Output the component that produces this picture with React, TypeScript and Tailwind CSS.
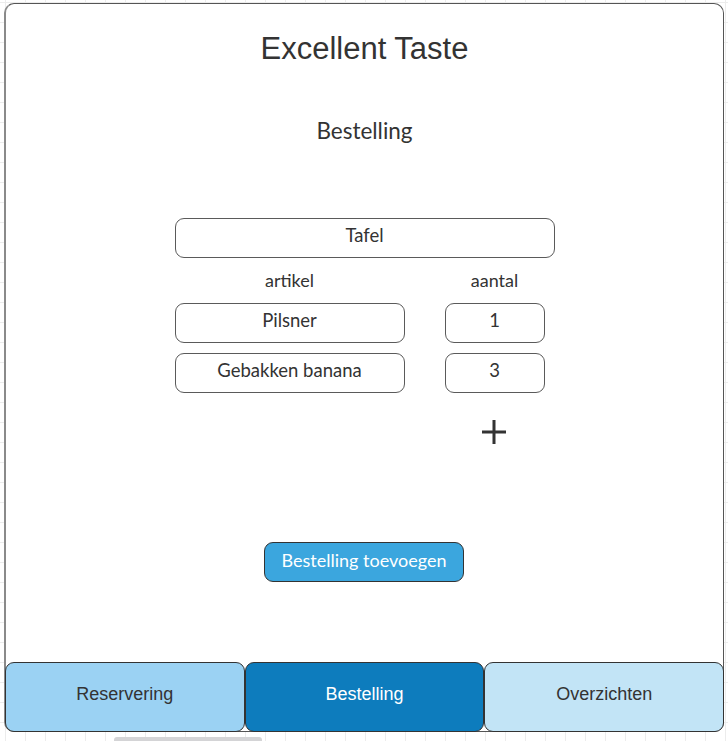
import React from "react";

const Field = ({ label, className }: { label: string; className: string }) => (
  <div
    className={`h-[40px] rounded-[9px] border border-[#5a5a5a] flex items-center justify-center pb-[5px] text-[18.5px] text-[#333] ${className}`}
  >
    {label}
  </div>
);

const orders = [
  { artikel: "Pilsner", aantal: "1" },
  { artikel: "Gebakken banana", aantal: "3" },
];

export default function App() {
  return (
    <div
      className="w-[728px] h-[741px] overflow-hidden relative bg-white bg-[linear-gradient(to_right,#ececec_1px,transparent_1px),linear-gradient(to_bottom,#ececec_1px,transparent_1px)] bg-[size:20px_20px] bg-[position:5px_2px] pt-[3px] pl-[4px]"
      style={{ fontFamily: "Lato, 'Liberation Sans', sans-serif" }}
    >
      <div className="w-[720px] h-[729px] bg-white rounded-[10px] border border-[#555] border-l-[2px] border-l-[#8a8a8a] flex flex-col">
        {/* Header */}
        <h1 className="mt-[27px] h-[36px] leading-[36px] text-center text-[31px] text-[#333] font-['Liberation_Sans',sans-serif]">
          Excellent Taste
        </h1>
        <h2 className="mt-[50px] h-[28px] leading-[28px] text-center text-[22.5px] text-[#333]">
          Bestelling
        </h2>

        {/* Form */}
        <div className="w-[380px] mx-auto mt-[73px] flex flex-col">
          <Field label="Tafel" className="w-[380px]" />
          <div className="flex mt-[12px] h-[20px] leading-[20px] text-[18px] text-[#333]">
            <div className="w-[230px] text-center">artikel</div>
            <div className="w-[100px] ml-[40px] text-center">aantal</div>
          </div>
          {orders.map((o, i) => (
            <div key={o.artikel} className={`flex ${i === 0 ? "mt-[13px]" : "mt-[10px]"}`}>
              <Field label={o.artikel} className="w-[230px]" />
              <Field label={o.aantal} className="w-[100px] ml-[40px]" />
            </div>
          ))}
          <div className="flex mt-[25px]">
            <div className="w-[100px] ml-[269px] flex justify-center">
              <svg width="28" height="28" viewBox="0 0 28 28">
                <path d="M14 2v24M2 14h24" stroke="#333" strokeWidth="3" />
              </svg>
            </div>
          </div>
        </div>

        <div className="mt-[96px] flex justify-center">
          <button className="w-[200px] h-[40px] ml-[-1px] rounded-[9px] border border-[#333] bg-[#3ba6de] text-white text-[18px] pb-[4px]">
            Bestelling toevoegen
          </button>
        </div>

        <div className="flex-1" />

        {/* Tabs */}
        <div className="flex h-[70px] -mx-[1px] -mb-[1px] text-[18px] font-['Liberation_Sans',sans-serif]">
          <div className="w-[240px] rounded-[9px] border border-[#333] bg-[#9bd2f3] text-[#333] flex items-center justify-center pb-[6px]">
            Reservering
          </div>
          <div className="w-[240px] rounded-[9px] border border-[#333] bg-[#0d7cbd] text-white flex items-center justify-center pb-[6px]">
            Bestelling
          </div>
          <div className="w-[240px] rounded-[9px] border border-[#333] bg-[#c2e4f6] text-[#333] flex items-center justify-center pb-[6px]">
            Overzichten
          </div>
        </div>
      </div>
      <div className="absolute left-[114px] top-[737px] w-[148px] h-[8px] rounded-[3px] bg-[#d4d4d6]" />
    </div>
  );
}
